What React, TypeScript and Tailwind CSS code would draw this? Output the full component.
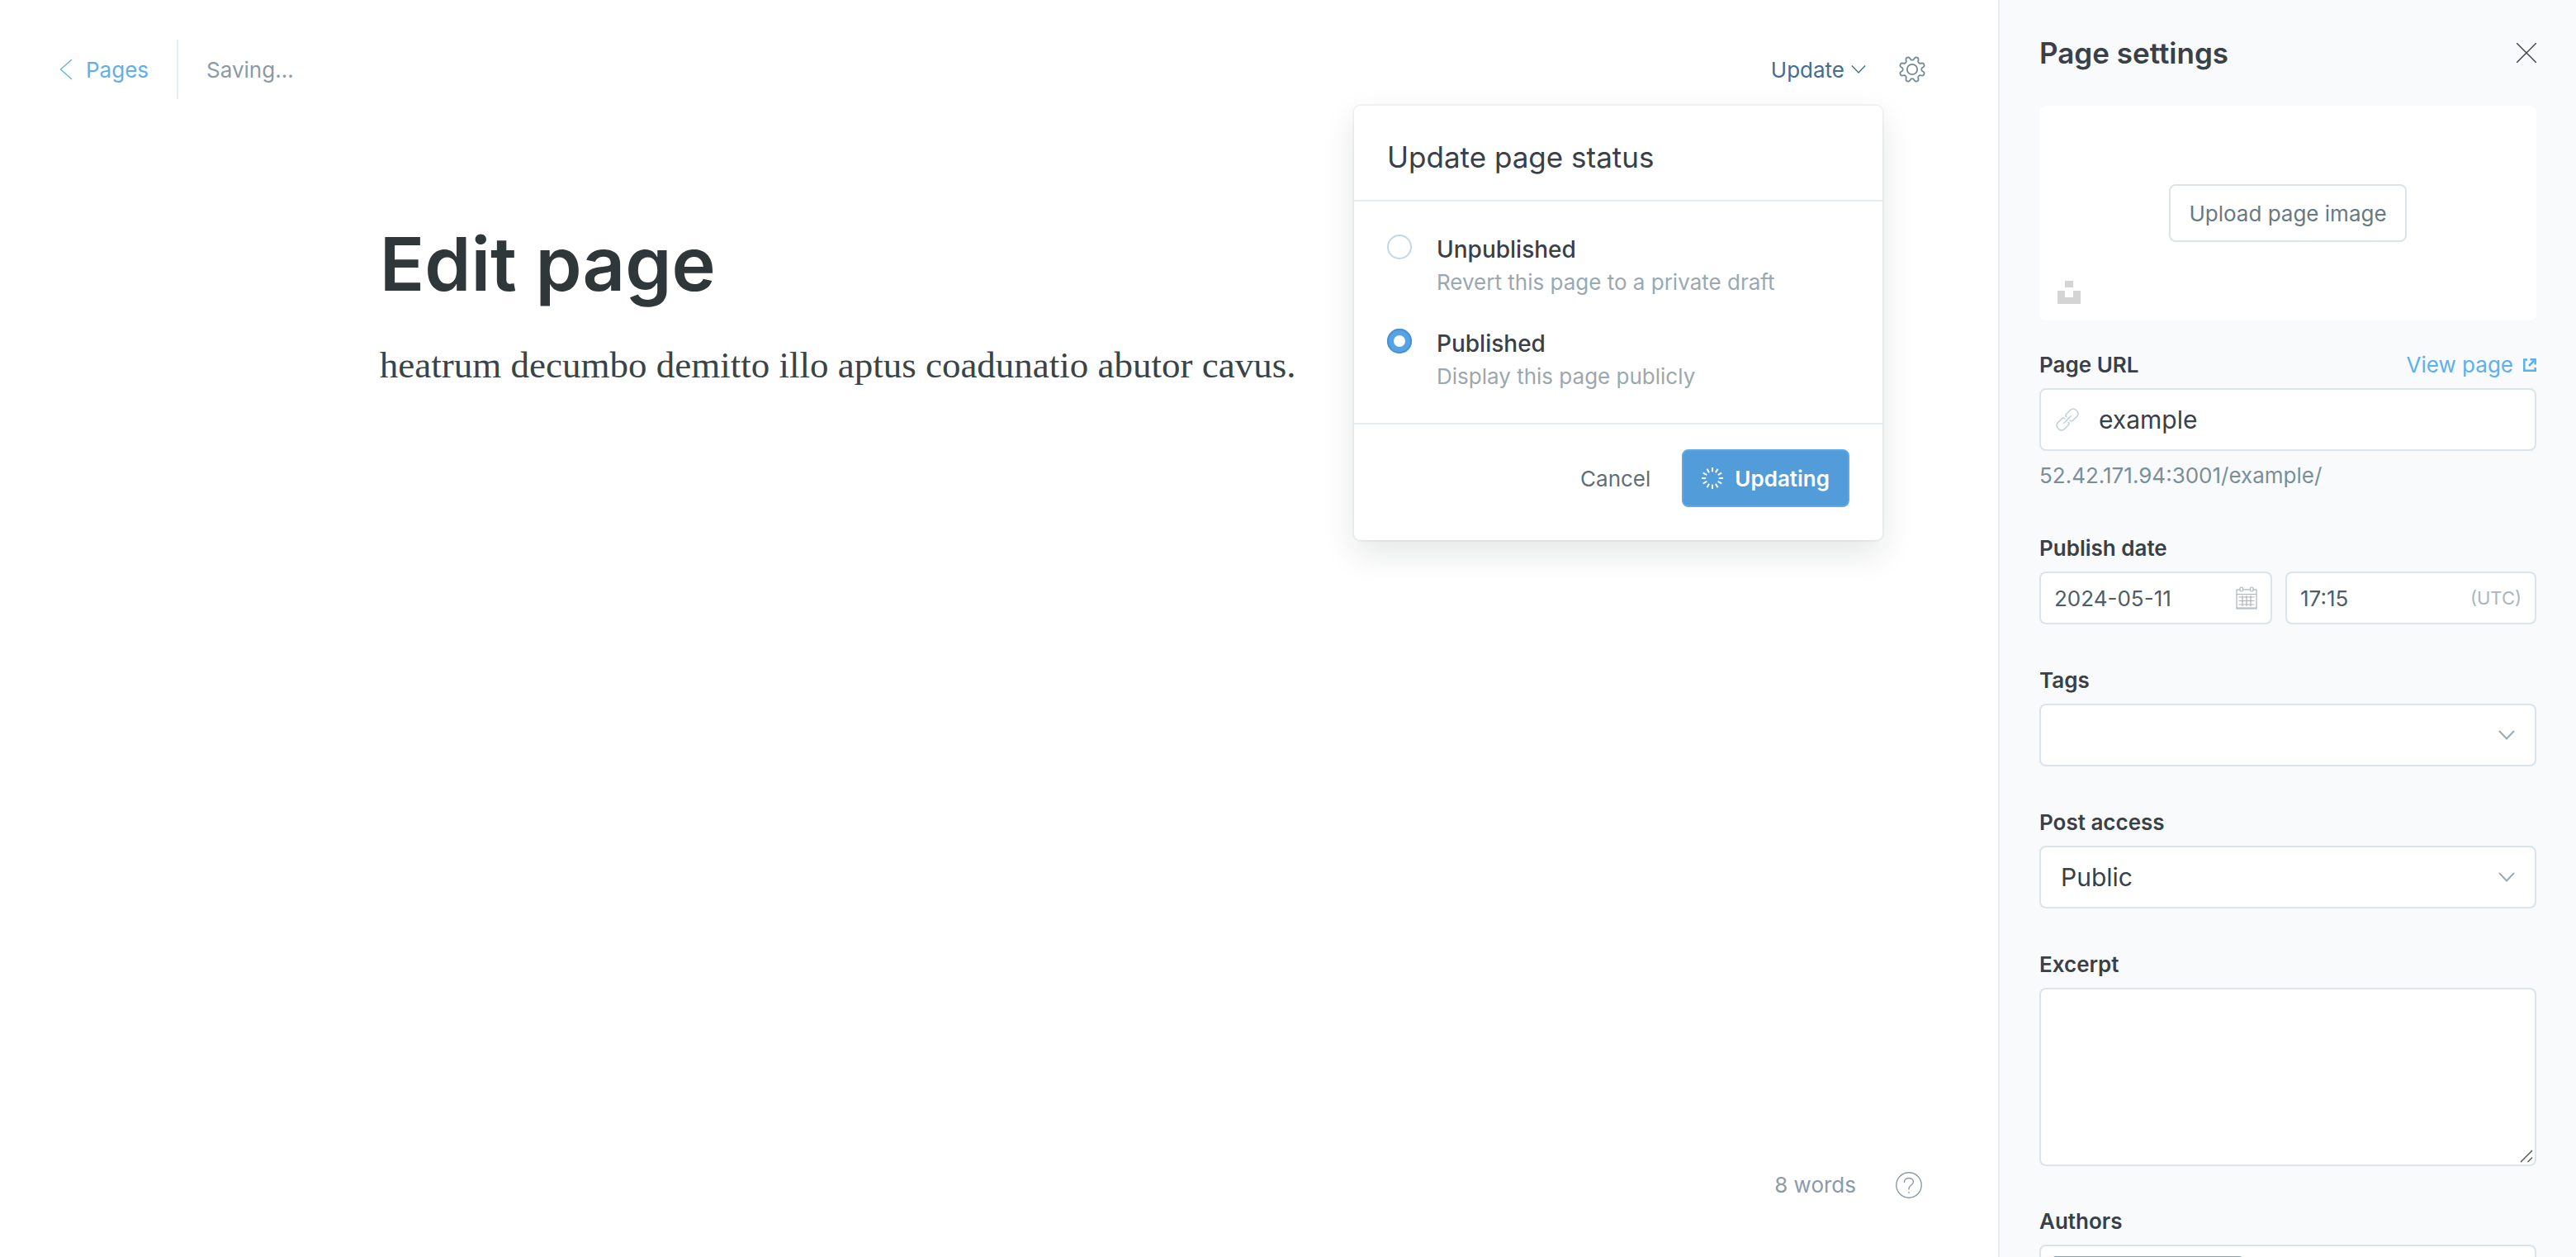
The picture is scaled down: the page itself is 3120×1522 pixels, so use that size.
import React from "react";

const fieldBorder = "rounded-lg border-2 border-[#dae4ea] bg-white";
const label = "text-[26px] leading-8 font-semibold text-[#394047]";

function ChevronDown({ className }: { className: string }) {
  return (
    <svg viewBox="0 0 20 12" className={className} fill="none" stroke="currentColor" aria-hidden="true">
      <path d="M1 1l9 9.5L19 1" />
    </svg>
  );
}

function GearIcon() {
  const points: string[] = [];
  const steps = 160;
  for (let i = 0; i < steps; i++) {
    const a = (i / steps) * Math.PI * 2 + Math.PI / 8;
    const wave = Math.tanh(1.6 * Math.cos(8 * a + Math.PI)) / Math.tanh(1.6);
    const r = 13.4 + 2.1 * wave;
    points.push(`${(16 + r * Math.sin(a)).toFixed(2)},${(16 - r * Math.cos(a)).toFixed(2)}`);
  }
  return (
    <svg viewBox="0 0 32 32" className="size-8" fill="none" stroke="currentColor" strokeWidth="1.8" strokeLinejoin="round" aria-hidden="true">
      <polygon points={points.join(" ")} />
      <circle cx="16" cy="16" r="6.200" />
    </svg>
  );
}

function Spinner() {
  return (
    <svg viewBox="0 0 26 26" className="size-[26px]" stroke="currentColor" strokeWidth="2" aria-hidden="true">
      {Array.from({ length: 12 }, (_, i) => (
        <line key={i} x1="13" y1="0" x2="13" y2="5.200" transform={`rotate(${i * 30} 13 13)`} />
      ))}
    </svg>
  );
}

function LinkIcon() {
  return (
    <svg viewBox="0 0 28 28" className="size-7 shrink-0" fill="none" stroke="#bfd0da" strokeWidth="1.5" strokeLinecap="round" strokeLinejoin="round" aria-hidden="true">
      <g transform="rotate(45 14 14)">
        <path d="M11 12.500a2.500 2.500 0 0 1-2.500-2.500V3a4.500 4.500 0 0 1 4.500-4.500h2a4.500 4.500 0 0 1 4.500 4.500v7a2.500 2.500 0 0 1-2.500 2.500" />
        <path d="M11 15.500a2.500 2.500 0 0 0-2.500 2.500V25a4.500 4.500 0 0 0 4.500 4.500h2a4.500 4.500 0 0 0 4.500-4.500v-7a2.500 2.500 0 0 0-2.500-2.500" />
        <path d="M14 8v12" />
      </g>
    </svg>
  );
}

function CalendarIcon() {
  return (
    <svg viewBox="0 0 26 28" className="h-7 w-[26px] shrink-0" fill="none" stroke="#aab5bb" strokeWidth="1.200" aria-hidden="true">
      <rect x="1" y="4" width="24" height="23" />
      <path d="M1 9.500h24M3.500 13h19M3.500 17.500h19M3.500 22h19M8 11v13M13 11v13M18 11v13M1 26h24" />
      <rect x="5" y="1" width="3.500" height="5" rx="1.500" fill="white" />
      <rect x="17.500" y="1" width="3.500" height="5" rx="1.500" fill="white" />
    </svg>
  );
}

function StatusOption({ id, title, text, checked }: { id: string; title: string; text: string; checked?: boolean }) {
  return (
    <div className="flex items-start gap-[30px]">
      <input
        type="radio"
        name="status"
        id={id}
        defaultChecked={checked}
        className="size-[30px] shrink-0 appearance-none rounded-full border-2 border-[#c5d7e4] bg-white checked:border-8 checked:border-[#55a3e2] checked:outline-2 checked:-outline-offset-2 checked:outline-[#4691d9]"
      />
      <label htmlFor={id} className="flex flex-col text-[26px]">
        <span className="text-[28px] leading-9 font-medium text-[#394047]">{title}</span>
        <span className="leading-[44px] text-[#9aa8b0]">{text}</span>
      </label>
    </div>
  );
}

function StatusMenu() {
  return (
    <form className="absolute top-[128px] right-[140px] w-[640px] rounded-lg bg-white shadow-[0_0_0_2px_rgba(0,0,0,0.04),0_16px_40px_rgba(20,30,40,0.11)]">
      <h2 className="border-b-2 border-[#e5eef4] px-10 pt-[38px] pb-7 text-[35px] leading-12 text-[#394047]">Update page status</h2>
      <div className="flex flex-col gap-[34px] border-b-2 border-[#e5eef4] px-10 pt-10 pb-[34px]">
        <StatusOption id="unpublished" title="Unpublished" text="Revert this page to a private draft" />
        <StatusOption id="published" title="Published" text="Display this page publicly" checked />
      </div>
      <div className="flex items-center justify-end gap-[38px] px-10 pt-[30px] pb-10 text-[26px]">
        <button type="button" className="text-[#5d7079]">Cancel</button>
        <button type="button" className="flex h-[70px] items-center gap-3.5 rounded-lg border-2 border-[#5ba9e6] bg-[#519cd9] px-[22px] font-semibold text-white">
          <Spinner />
          Updating
        </button>
      </div>
    </form>
  );
}

function Editor() {
  return (
    <main className="relative flex min-w-0 flex-1 flex-col bg-white">
      <header className="flex h-[168px] items-center justify-between pr-[88px] pl-[72px] text-[26px]">
        <div className="flex items-center">
          <a href="#pages" className="flex items-center gap-4 pr-[34px] text-[#5eb0ec]">
            <svg viewBox="0 0 16 26" className="h-[26px] w-4" fill="none" stroke="currentColor" strokeWidth="1.300" aria-hidden="true">
              <path d="M15 1L1.500 13 15 25" />
            </svg>
            Pages
          </a>
          <span className="h-[72px] w-0.5 bg-[#e5eef4]" />
          <span className="pl-[34px] text-[#8a9ba5]">Saving...</span>
        </div>
        <div className="flex items-center gap-10">
          <button type="button" className="flex items-center gap-2 text-[#456d8b]">
            Update
            <ChevronDown className="h-3 w-[18px] stroke-[1.5]" />
          </button>
          <button type="button" aria-label="Settings" className="text-[#738a94]">
            <GearIcon />
          </button>
        </div>
      </header>
      <article className="px-[19%] pt-24 text-[#2f373b]">
        <h1 className="text-[90px] leading-[112px] font-semibold">Edit page</h1>
        <p className="pt-8 font-['Liberation_Serif',serif] text-[45px] leading-[68px] text-[#394447]">
          heatrum decumbo demitto illo aptus coadunatio abutor cavus.
        </p>
      </article>
      <footer className="mt-auto flex items-center justify-end gap-12 pr-[92px] pb-[68px] text-[26px] text-[#8a9ba5]">
        8 words
        <a href="#help" aria-label="Help">
          <svg viewBox="0 0 32 32" className="size-8" fill="none" stroke="currentColor" strokeWidth="1.400" aria-hidden="true">
            <circle cx="16" cy="16" r="15.200" />
            <path d="M10.500 13V12a5.500 4.500 0 0 1 11 0c0 4-5.500 4.500-5.500 8v1.500M16 24v1.800" />
          </svg>
        </a>
      </footer>
      <StatusMenu />
    </main>
  );
}

function Sidebar() {
  return (
    <aside className="flex w-[700px] shrink-0 flex-col border-l-2 border-[#e5eef4] bg-[#f8fafc] px-12 text-[26px] *:shrink-0">
      <div className="flex h-32 items-center justify-between">
        <h2 className="text-[35px] leading-12 font-semibold text-[#394047]">Page settings</h2>
        <button type="button" aria-label="Close">
          <svg viewBox="0 0 24 24" className="size-6" stroke="#394047" strokeWidth="1.400" aria-hidden="true">
            <path d="M0 0l24 24M24 0L0 24" />
          </svg>
        </button>
      </div>
      <div className="relative flex h-[260px] items-center justify-center rounded-lg bg-white">
        <button type="button" className="h-[70px] rounded-lg border-2 border-[#dae4ea] px-[22px] text-[#667a84]">Upload page image</button>
        <svg viewBox="0 0 28 28" className="absolute bottom-5 left-[22px] size-7" fill="#d4d4d4" aria-hidden="true">
          <path d="M9 0h10v8H9zM0 12h9v8h10v-8h9v16H0z" />
        </svg>
      </div>

      <div className="flex items-center justify-between pt-9 pb-2.5">
        <label htmlFor="url" className={label}>Page URL</label>
        <a href="#view" className="flex items-center gap-3 leading-9 text-[#5eb0ec]">
          View page
          <svg viewBox="0 0 16 16" className="size-4" fill="none" stroke="currentColor" strokeWidth="2.500" aria-hidden="true">
            <path d="M5 1.500H1.300v13.200h13.400V11" />
            <path d="M7 9l6-6M8.500 1.300h6.200v6.200" />
          </svg>
        </a>
      </div>
      <div className={`flex h-[76px] items-center gap-6 px-[18px] ${fieldBorder}`}>
        <LinkIcon />
        <input id="url" defaultValue="example" className="min-w-0 flex-1 text-[30px] text-[#394047] outline-none" />
      </div>
      <p className="pt-3 leading-9 text-[#7b8e98]">52.42.171.94:3001/example/</p>

      <label htmlFor="date" className={`pt-[54px] pb-3 ${label}`}>Publish date</label>
      <div className="flex gap-4">
        <div className={`flex h-16 w-[282px] items-center px-4 ${fieldBorder}`}>
          <input id="date" defaultValue="2024-05-11" className="min-w-0 flex-1 text-[#4e5d66] outline-none" />
          <CalendarIcon />
        </div>
        <div className={`flex h-16 min-w-0 flex-1 items-center px-4 ${fieldBorder}`}>
          <input aria-label="Publish time" defaultValue="17:15" className="min-w-0 flex-1 text-[#4e5d66] outline-none" />
          <span className="text-[22px] text-[#a9b6bd]">(UTC)</span>
        </div>
      </div>

      <label htmlFor="tags" className={`pt-[52px] pb-3 ${label}`}>Tags</label>
      <div className={`flex h-[76px] items-center pr-6 pl-6 ${fieldBorder}`}>
        <input id="tags" className="min-w-0 flex-1 text-[30px] outline-none" />
        <ChevronDown className="h-3 w-5 stroke-2 text-[#9baab4]" />
      </div>

      <label htmlFor="access" className={`pt-[52px] pb-3 ${label}`}>Post access</label>
      <div className={`flex h-[76px] items-center pr-6 pl-6 ${fieldBorder}`}>
        <select id="access" className="min-w-0 flex-1 appearance-none text-[30px] text-[#394047] outline-none">
          <option>Public</option>
        </select>
        <ChevronDown className="h-3 w-5 stroke-2 text-[#9baab4]" />
      </div>

      <label htmlFor="excerpt" className={`pt-[52px] pb-3 ${label}`}>Excerpt</label>
      <div className="relative flex">
        <textarea id="excerpt" className={`h-[216px] flex-1 resize-none px-6 py-4 text-[30px] ${fieldBorder}`} />
        <svg viewBox="0 0 16 16" className="pointer-events-none absolute right-1 bottom-1 size-4" stroke="#555b5f" strokeWidth="1.500" aria-hidden="true">
          <path d="M1 15L15 1M9.500 15L15 9.500" />
        </svg>
      </div>

      <label htmlFor="authors" className={`pt-[51px] pb-3 ${label}`}>Authors</label>
      <div className={`flex h-[76px] px-3.5 py-3 ${fieldBorder}`}>
        <span className="h-12 w-[230px] rounded-sm bg-[#5fa8de]" />
        <input id="authors" className="min-w-0 flex-1 outline-none" />
      </div>
    </aside>
  );
}

export default function App() {
  return (
    <div className="flex h-screen overflow-hidden font-['Inter',sans-serif]">
      <Editor />
      <Sidebar />
    </div>
  );
}
